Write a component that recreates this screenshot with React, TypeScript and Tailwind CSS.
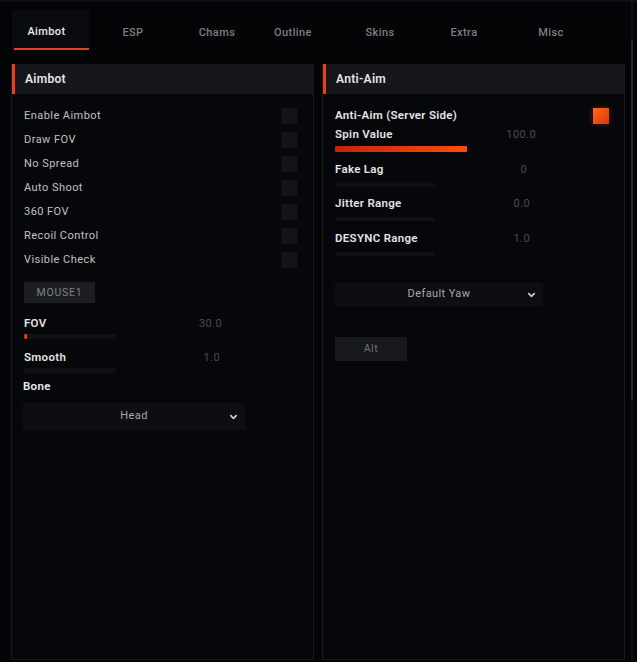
import { ChevronDown } from 'lucide-react'

const FONT = { fontFamily: 'Roboto, "Liberation Sans", "Noto Sans", sans-serif' }

const tabs = [
  { name: 'Aimbot', cls: 'w-[77px] pr-[8px]' },
  { name: 'ESP', cls: 'w-[88px]' },
  { name: 'Chams', cls: 'w-[80px]' },
  { name: 'Outline', cls: 'w-[72px]' },
  { name: 'Skins', cls: 'w-[102px]' },
  { name: 'Extra', cls: 'w-[66px]' },
  { name: 'Misc', cls: 'w-[108px]' },
]

const toggles = ['Enable Aimbot', 'Draw FOV', 'No Spread', 'Auto Shoot', '360 FOV', 'Recoil Control', 'Visible Check']

function PanelHeader({ title }: { title: string }) {
  return (
    <div className="flex h-[30px] items-center bg-[#15171b] border-l-[3px] border-[#e8401a] pl-[10px]">
      <span className="text-[12px] font-semibold text-[#e6e6e6] tracking-[0.3px]">{title}</span>
    </div>
  )
}

function Slider({
  label,
  value,
  width,
  trackWidth,
  fill,
  trackGap = 4,
  trackH = 5,
}: {
  label: string
  value: string
  width: number
  trackWidth: number
  fill: number
  trackGap?: number
  trackH?: number
}) {
  return (
    <div style={{ width }}>
      <div className="flex h-[16px] items-center justify-between pt-[2px]">
        <span className="text-[11.5px] font-semibold text-[#e4e4e4] tracking-[0.3px]">{label}</span>
        <span className="text-[11px] text-[#4a4c50] tracking-[0.4px]">{value}</span>
      </div>
      <div className="bg-[#0e1013] rounded-[1px]" style={{ width: trackWidth, height: trackH, marginTop: trackGap }}>
        <div
          className="h-full rounded-[1px] bg-gradient-to-r from-[#c81f0c] to-[#ff4a12]"
          style={{ width: fill }}
        />
      </div>
    </div>
  )
}

function Dropdown({ label, width, height }: { label: string; width: number; height: number }) {
  return (
    <div
      className="relative flex items-center justify-center bg-[#0c0e11]"
      style={{ width, height }}
    >
      <span className="text-[11px] text-[#a8a8a8] tracking-[0.4px]">{label}</span>
      <ChevronDown
        className="absolute right-[6px] top-1/2 -translate-y-1/2 w-[11px] h-[11px] text-[#cfcfcf]"
        strokeWidth={3.5}
      />
    </div>
  )
}

export default function App() {
  return (
    <div className="w-[637px] h-[662px] bg-[#030405] overflow-hidden relative" style={FONT}>
      {/* 頂部細線 */}
      <div className="h-[2px] bg-[#0d1116]" />

      {/* 標籤列 */}
      <div className="flex h-[48px] pl-[12px] pt-[8px]">
        {tabs.map((t, i) => (
          <div key={t.name} className={`flex flex-col ${t.cls} ${i === 0 ? 'bg-[#0a0b0e]' : ''}`}>
            <span
              className={`flex-1 flex items-center justify-center pt-[6px] text-[11px] font-medium tracking-[0.4px] ${
                i === 0 ? 'text-[#ececec]' : 'text-[#7d7f83]'
              }`}
            >
              {t.name}
            </span>
            {i === 0 && <div className="h-[2px] w-[75px] ml-[2px] bg-[#e8401a]" />}
          </div>
        ))}
      </div>

      {/* 面板 */}
      <div className="grid grid-cols-[303px_303px] gap-[8px] pl-[11px] pt-[14px]">
        {/* 左: Aimbot */}
        <div className="h-[596px] bg-[#06070a] border border-[#17191c] border-t-0">
          <PanelHeader title="Aimbot" />
          <div className="pl-[12px] pr-[16px] pt-[10px]">
            {toggles.map((t) => (
              <div key={t} className="flex h-[24px] items-center justify-between">
                <span className="text-[11px] text-[#c2c2c2] tracking-[0.45px]">{t}</span>
                <div className="w-[16px] h-[16px] bg-[#121417]" />
              </div>
            ))}

            <div className="mt-[10px] flex h-[21px] w-[71px] items-center justify-center bg-[#1b1d21]">
              <span className="text-[10.5px] text-[#7f8185] tracking-[0.8px]">MOUSE1</span>
            </div>

            <div className="mt-[12px]">
              <Slider label="FOV" value="30.0" width={198} trackWidth={92} fill={3} trackGap={3} />
            </div>
            <div className="mt-[10px]">
              <Slider label="Smooth" value="1.0" width={196} trackWidth={92} fill={0} trackGap={3} />
            </div>

            <div className="mt-[5px] -ml-[1px] flex h-[16px] items-center pt-[2px]">
              <span className="text-[11.5px] font-semibold text-[#ececec] tracking-[0.3px]">Bone</span>
            </div>
            <div className="mt-[9px] -ml-[1px]">
              <Dropdown label="Head" width={222} height={27} />
            </div>
          </div>
        </div>

        {/* 右: Anti-Aim */}
        <div className="h-[596px] bg-[#06070a] border border-[#17191c] border-t-0">
          <PanelHeader title="Anti-Aim" />
          <div className="pl-[12px] pr-[15px] pt-[10px]">
            <div className="flex h-[24px] items-center justify-between">
              <span className="text-[11.5px] font-semibold text-[#e6e6e6] tracking-[0.3px]">Anti-Aim (Server Side)</span>
              <div className="w-[16px] h-[16px] bg-gradient-to-br from-[#ff6a1a] to-[#d8340c] shadow-[0_0_6px_rgba(255,80,20,0.35)]" />
            </div>

            <div className="-mt-[2px]">
              <Slider label="Spin Value" value="100.0" width={201} trackWidth={132} fill={132} trackGap={4} trackH={6} />
            </div>
            <div className="mt-[9px]">
              <Slider label="Fake Lag" value="0" width={192} trackWidth={100} fill={0} trackGap={6} trackH={4} />
            </div>
            <div className="mt-[8px]">
              <Slider label="Jitter Range" value="0.0" width={195} trackWidth={100} fill={0} trackGap={6} trackH={4} />
            </div>
            <div className="mt-[9px]">
              <Slider label="DESYNC Range" value="1.0" width={195} trackWidth={100} fill={0} trackGap={6} trackH={4} />
            </div>

            <div className="mt-[27px]">
              <Dropdown label="Default Yaw" width={208} height={23} />
            </div>

            <div className="mt-[31px] flex h-[24px] w-[72px] items-center justify-center bg-[#17191d]">
              <span className="text-[10.5px] text-[#6f7175] tracking-[0.6px]">Alt</span>
            </div>
          </div>
        </div>
      </div>

      {/* 捲軸 */}
      <div className="absolute right-[4px] top-0 h-[662px] w-[2px] bg-[#0d1014]">
        <div className="mt-[40px] h-[360px] w-[2px] bg-[#24272c]" />
      </div>
    </div>
  )
}
